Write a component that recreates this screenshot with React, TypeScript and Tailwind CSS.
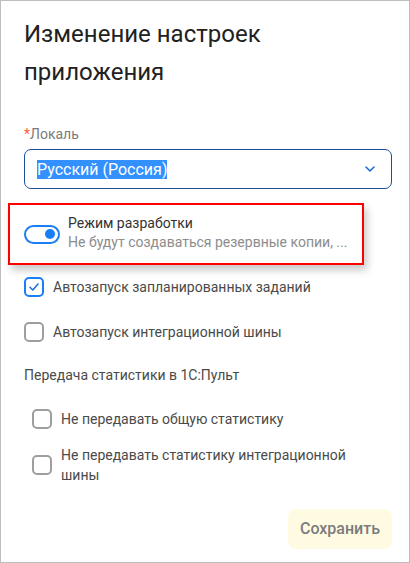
import React from 'react';

function Checkbox({ checked }: { checked?: boolean }) {
  return (
    <div
      className={`w-[20px] h-[20px] shrink-0 rounded-[5px] border-2 flex items-center justify-center ${
        checked ? 'border-[#1a7ef5]' : 'border-[#9e9e9e]'
      }`}
    >
      {checked && (
        <svg width="10" height="8" viewBox="0 0 10 8" fill="none">
          <path d="M1 4.2 L3.8 7 L9 1" stroke="#1a6fd6" strokeWidth="1.5" strokeLinecap="round" strokeLinejoin="round" />
        </svg>
      )}
    </div>
  );
}

function CheckRow({ label, checked, className = '' }: { label: React.ReactNode; checked?: boolean; className?: string }) {
  return (
    <div className={`flex items-center gap-[9px] ${className}`}>
      <Checkbox checked={checked} />
      <span className="text-[14px] leading-[20px] text-[#4a4a4a]">{label}</span>
    </div>
  );
}

export default function App() {
  return (
    <div
      className="w-[410px] h-[563px] border border-[#bdbdbd] bg-white pl-[23px] pr-[17px] pt-[14px] flex flex-col"
      style={{ fontFamily: 'Roboto, "Noto Sans", sans-serif' }}
    >
      <h1 className="text-[24px] leading-[38px] text-[#212121] font-normal">
        Изменение настроек
        <br />
        приложения
      </h1>

      <div className="mt-[33px] text-[14px] leading-[20px] text-[#7a7a7a]">
        <span className="text-[#f4623a]">*</span>Локаль
      </div>

      <div className="mt-[5px] h-[40px] rounded-[7px] border border-[#1d4f98] flex items-center justify-between pl-[12px] pr-[16px]">
        <span className="text-[16px] leading-[19px] text-white bg-[#3390ff]">Русский (Россия)</span>
        <svg width="10" height="6" viewBox="0 0 10 6" fill="none">
          <path d="M1 1 L5 5 L9 1" stroke="#1a6fd6" strokeWidth="1.6" strokeLinecap="round" strokeLinejoin="round" />
        </svg>
      </div>

      <div className="mt-[14px] -ml-[16px] w-[356px] h-[62px] border-2 border-[#ff0000] shadow-[3px_5px_8px_rgba(0,0,0,0.22)] flex items-center pl-[14px] pr-[14px] gap-[8px]">
        <div className="w-[36px] h-[19px] shrink-0 rounded-full border-2 border-[#1a7ef5] flex items-center justify-end pr-[3px]">
          <div className="w-[10px] h-[10px] rounded-full bg-[#1a7ef5]" />
        </div>
        <div className="flex flex-col min-w-0 pb-[2px]">
          <span className="text-[14px] leading-[19px] text-[#333333]">Режим разработки</span>
          <span className="text-[14px] leading-[19px] text-[#8c8c8c] truncate">Не будут создаваться резервные копии, ...</span>
        </div>
      </div>

      <CheckRow className="mt-[12px]" checked label="Автозапуск запланированных заданий" />
      <CheckRow className="mt-[25px]" label="Автозапуск интеграционной шины" />

      <div className="mt-[23px] text-[14px] leading-[20px] text-[#4a4a4a]">Передача статистики в 1С:Пульт</div>

      <div className="pl-[8px] flex flex-col">
        <CheckRow className="mt-[24px]" label="Не передавать общую статистику" />
        <CheckRow
          className="mt-[16px]"
          label={
            <>
              Не передавать статистику интеграционной
              <br />
              шины
            </>
          }
        />
      </div>

      <div className="mt-[24px] flex justify-end">
        <button className="w-[104px] h-[40px] rounded-[8px] bg-[#fffbe3] text-[16px] font-medium text-[#7c7c7c]">
          Сохранить
        </button>
      </div>
    </div>
  );
}
